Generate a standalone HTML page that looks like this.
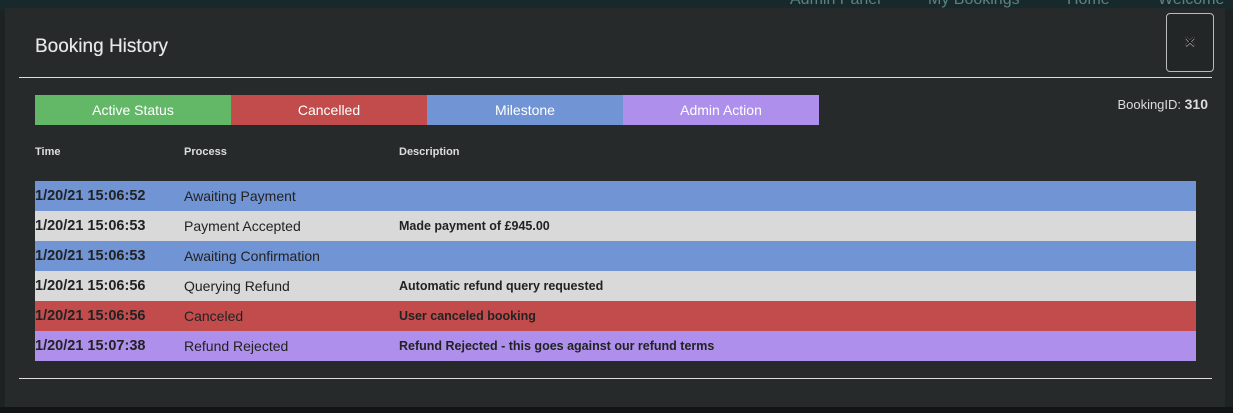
<!DOCTYPE html>
<html><head><style>
body{margin:0;width:1233px;height:413px;background:#1d2222;overflow:hidden;font-family:"Liberation Sans",sans-serif;position:relative}
.top{position:absolute;left:0;top:0;width:1233px;height:10px;background:#17292b}
.nav{position:absolute;top:-9px;font-size:16px;color:#5d8286}
.modal{position:absolute;left:5px;top:8px;width:1220px;height:399px;background:#262a2b}
.bottom{position:absolute;left:0;top:407px;width:1233px;height:6px;background:#121515}
h1{position:absolute;left:30px;top:28px;margin:0;font-size:19px;font-weight:normal;color:#e8e8e8;text-shadow:0 0 0.4px #e8e8e8}
.close{position:absolute;left:1161px;top:5px;width:48px;height:59px;border:1px solid #bbb;border-radius:4px;box-sizing:border-box;background:#222626;color:#111;font-size:15px;text-align:center;line-height:57px;text-shadow:0 0 1px #ccc,0 1px 0 #999}
.hr{position:absolute;left:14px;width:1193px;height:1px;background:#ddd}
.leg{position:absolute;top:87px;height:30px;width:196px;color:#fff;font-size:14px;text-align:center;line-height:30px}
.bid{position:absolute;right:17px;top:88px;color:#ddd;font-size:13px}
.th{position:absolute;top:138px;color:#ddd;font-size:11px;font-weight:bold}
.row{position:absolute;left:30px;width:1161px;height:30px;font-size:14px;color:#222;line-height:30px}
.row span{position:absolute}
.t{left:0;font-weight:bold;font-size:14.5px}.p{left:149px}.d{left:364px;font-size:12.5px;font-weight:bold}
</style></head><body>
<div class="top"></div>
<div class="nav" style="left:790px">Admin Panel</div>
<div class="nav" style="left:928px">My Bookings</div>
<div class="nav" style="left:1067px">Home</div>
<div class="nav" style="left:1158px">Welcome</div>
<div class="modal">
<h1>Booking History</h1>
<div class="close">✕</div>
<div class="hr" style="top:69px"></div>
<div class="leg" style="left:30px;background:#62b866">Active Status</div>
<div class="leg" style="left:226px;background:#c24c4c">Cancelled</div>
<div class="leg" style="left:422px;background:#7094d4">Milestone</div>
<div class="leg" style="left:618px;background:#ae90ec">Admin Action</div>
<div class="bid">BookingID: <b style="font-size:14px">310</b></div>
<div class="th" style="left:30px">Time</div>
<div class="th" style="left:179px">Process</div>
<div class="th" style="left:394px">Description</div>
<div class="row" style="top:173px;background:#7094d4"><span class="t">1/20/21 15:06:52</span><span class="p">Awaiting Payment</span></div>
<div class="row" style="top:203px;background:#d9d9d9"><span class="t">1/20/21 15:06:53</span><span class="p">Payment Accepted</span><span class="d">Made payment of £945.00</span></div>
<div class="row" style="top:233px;background:#7094d4"><span class="t">1/20/21 15:06:53</span><span class="p">Awaiting Confirmation</span></div>
<div class="row" style="top:263px;background:#d9d9d9"><span class="t">1/20/21 15:06:56</span><span class="p">Querying Refund</span><span class="d">Automatic refund query requested</span></div>
<div class="row" style="top:293px;background:#c24c4c"><span class="t">1/20/21 15:06:56</span><span class="p">Canceled</span><span class="d">User canceled booking</span></div>
<div class="row" style="top:323px;background:#ae90ec"><span class="t">1/20/21 15:07:38</span><span class="p">Refund Rejected</span><span class="d">Refund Rejected - this goes against our refund terms</span></div>
<div class="hr" style="top:370px"></div>
</div>
<div class="bottom"></div>
</body></html>
